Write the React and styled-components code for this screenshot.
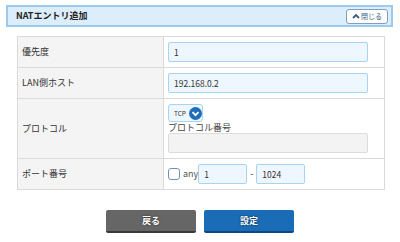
import styled, { createGlobalStyle } from 'styled-components'

const Global = createGlobalStyle`
body {
  margin : 0;
  background : white;
  font-family : "Noto Sans CJK JP", "Noto Sans", sans-serif;
  color : #333;
}`

const Page = styled.div`
width : 400px;
height : 242px;
padding-top : 5px;
box-sizing : border-box;
overflow : hidden;`

const Header = styled.div`
box-sizing : border-box;
margin : 0 7px 0 6px;
height : 22px;
border : 2px solid #9ccbef;
background : #dcedfb;
display : flex;
align-items : center;
justify-content : space-between;
padding : 0 3px 0 8px;`

const Title = styled.h1`
margin : 0;
font-size : 9px;
line-height : 12px;
font-weight : bold;
color : #222;`

const CloseButton = styled.button`
width : 42px;
height : 15px;
padding : 0;
background : white;
border : 1px solid #7f9fbf;
border-radius : 3px;
font-family : inherit;
font-size : 7px;
line-height : 9px;
color : #3a5f86;
display : flex;
align-items : center;
justify-content : center;
gap : 1px;`

const Table = styled.div`
margin : 9px 0 0 17px;
width : 368px;
border : 1px solid #dadada;
box-sizing : border-box;`

const Row = styled.div`
display : grid;
grid-template-columns : 146px 1fr;
grid-template-rows : ${p => (p.$tall ? '59px' : '30px')};
border-bottom : 1px solid #dadada;
&:last-child { border-bottom : none; }`

const Label = styled.div`
background : #f4f4f4;
border-right : 1px solid #dadada;
font-size : 9px;
line-height : 12px;
display : flex;
align-items : center;
padding-left : 4px;
overflow : hidden;`

const Value = styled.div`
box-sizing : border-box;
padding : ${p => (p.$tall ? '5px 0 0 4px' : '0 0 0 4px')};
display : flex;
flex-direction : ${p => (p.$tall ? 'column' : 'row')};
align-items : ${p => (p.$tall ? 'flex-start' : 'center')};
overflow : hidden;`

const Input = styled.input`
box-sizing : border-box;
width : ${p => p.$w || 200}px;
height : 20px;
margin : 0;
border : 1px solid #a8d4f4;
border-radius : 2px;
background : #eef7ff;
font-family : inherit;
font-size : 8.5px;
color : #333;
padding : 0 5px;
outline : none;
&:disabled {
  background : #f3f3f3;
  border-color : #dcdcdc;
}`

const Select = styled.div`
box-sizing : border-box;
width : 35px;
height : 18px;
border : 1px solid #a8d4f4;
border-radius : 3px;
background : #eef7ff;
display : flex;
align-items : center;
padding-left : 5px;
gap : 3px;
font-size : 6.5px;
color : #333;`

const SubLabel = styled.div`
font-size : 9px;
line-height : 11px;
color : #444;`

const Check = styled.span`
box-sizing : border-box;
width : 12px;
height : 12px;
border : 1px solid #6f93b8;
border-radius : 3px;
background : white;
margin-right : 3px;`

const Any = styled.span`
font-size : 9px;
line-height : 12px;
color : #555;`

const Dash = styled.span`
font-size : 9px;
line-height : 12px;
width : 9px;
text-align : center;`

const Buttons = styled.div`
display : flex;
justify-content : center;
gap : 8px;
margin-top : 20px;`

const Btn = styled.button`
width : 90px;
height : 23px;
padding : 0;
border : none;
border-radius : 2px;
background : ${p => (p.$primary ? '#1a6cb6' : '#666666')};
border-bottom : 2px solid ${p => (p.$primary ? '#0d4a84' : '#3a3a3a')};
color : white;
font-family : inherit;
font-size : 9px;
font-weight : bold;
text-shadow : 0 0 2px rgba(0,0,0,0.8);`

export default function App() {
  return (
    <Page>
      <Global />
      <Header>
        <Title>NATエントリ追加</Title>
        <CloseButton>
          <svg width="8" height="6" viewBox="0 0 8 6">
            <path d="M1 5 L4 2 L7 5" fill="none" stroke="#3a5f86" strokeWidth="1.8" />
          </svg>
          閉じる
        </CloseButton>
      </Header>

      <Table>
        <Row>
          <Label>優先度</Label>
          <Value><Input defaultValue="1" /></Value>
        </Row>
        <Row>
          <Label>LAN側ホスト</Label>
          <Value><Input defaultValue="192.168.0.2" /></Value>
        </Row>
        <Row $tall>
          <Label>プロトコル</Label>
          <Value $tall>
            <Select>
              TCP
              <svg width="13" height="13" viewBox="0 0 13 13">
                <circle cx="6.5" cy="6.5" r="6.5" fill="#1f6fb8" />
                <path d="M3.5 5.2 L6.5 8.2 L9.5 5.2" fill="none" stroke="white" strokeWidth="1.8" />
              </svg>
            </Select>
            <SubLabel>プロトコル番号</SubLabel>
            <Input disabled />
          </Value>
        </Row>
        <Row>
          <Label>ポート番号</Label>
          <Value>
            <Check />
            <Any>any</Any>
            <Input $w={49} defaultValue="1" />
            <Dash>-</Dash>
            <Input $w={49} defaultValue="1024" />
          </Value>
        </Row>
      </Table>

      <Buttons>
        <Btn>戻る</Btn>
        <Btn $primary>設定</Btn>
      </Buttons>
    </Page>
  )
}
